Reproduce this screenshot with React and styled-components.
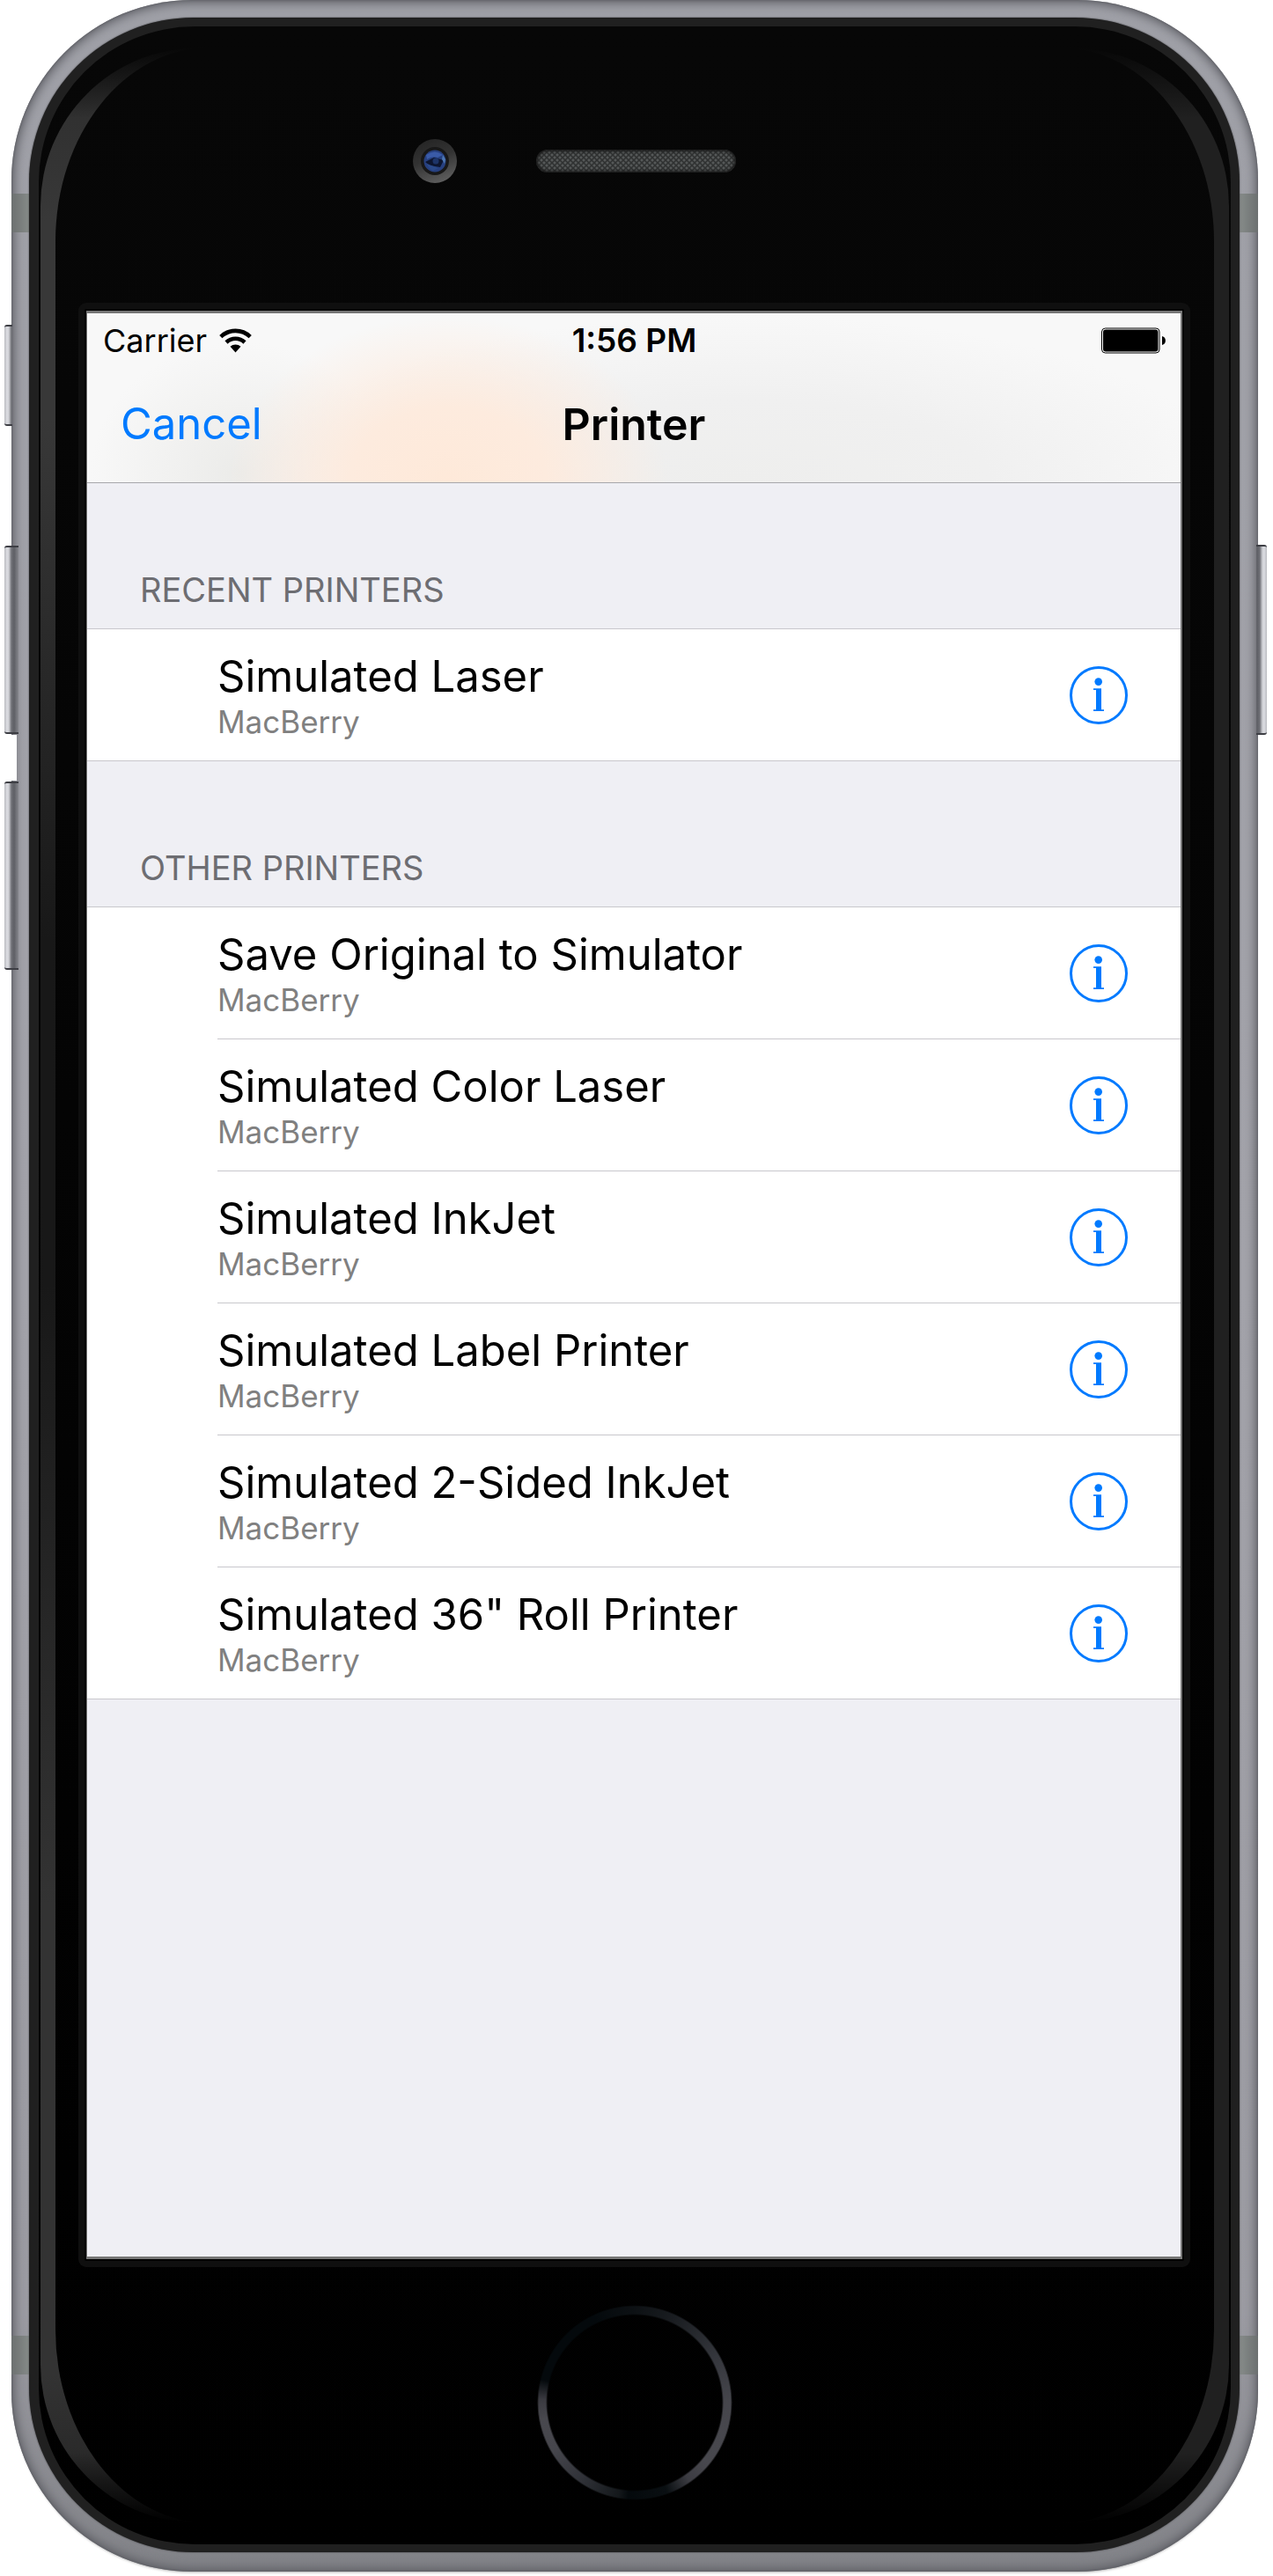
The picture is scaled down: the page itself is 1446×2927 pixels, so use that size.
import React from "react";
import styled, { createGlobalStyle } from "styled-components";

const GlobalStyle = createGlobalStyle`
  *, *::before, *::after { box-sizing: border-box; }
  body {
    margin: 0;
    background: #fff;
    font-family: Inter, "Liberation Sans", sans-serif;
    -webkit-font-smoothing: antialiased;
  }
  h1, h2, p, ul { margin: 0; padding: 0; font-weight: 400; }
  button { font: inherit; margin: 0; padding: 0; border: 0; background: none; cursor: pointer; }
`;

/* ---------- Device ---------- */

const Page = styled.div`
  padding: 0 17px 5px 13px;
`;

const Phone = styled.div`
  position: relative;
  padding: 20px 21px 22px 20px;
  border-radius: 205px;
  background: linear-gradient(#9fa0a7, #a3a3aa 50%, #9b9ba2 90%, #818287);
  box-shadow:
    inset 0 0 12px 3px #5c5d63,
    inset 0 0 3px #505157,
    0 3px 3px -2px rgba(0, 0, 0, 0.3);
`;

const AntennaBand = styled.span`
  position: absolute;
  ${(p) => p.$side}: 0;
  ${(p) => p.$edge}: ${(p) => (p.$edge === "top" ? 220 : 224)}px;
  width: 21px;
  height: 44px;
  background: linear-gradient(
    to ${(p) => (p.$side === "left" ? "right" : "left")},
    #6c7070,
    #878c8a
  );
`;

const SideKey = styled.span`
  position: absolute;
  top: ${(p) => p.$top}px;
  ${(p) => p.$side}: ${(p) => (p.$side === "left" ? -8 : -10)}px;
  width: ${(p) => p.$depth}px;
  height: ${(p) => p.$height}px;
  border-radius: ${(p) => (p.$side === "left" ? "3px 0 0 3px" : "0 3px 3px 0")};
  border: solid #3d3e44;
  border-width: 2px 0;
  background: linear-gradient(
    to ${(p) => (p.$side === "left" ? "right" : "left")},
    #b9babf,
    #dcdde2 3px,
    #cfd0d5 5px,
    #6f7076 8px,
    #5e5f65 11px,
    #85868c 16px
  );
`;

const KeyGap = styled.span`
  position: absolute;
  top: 835px;
  left: -1px;
  width: 7px;
  height: 52px;
  background: #fff;
`;

const Glass = styled.div`
  position: relative;
  padding: 10px 10px 9px 11px;
  border-radius: 187px;
  background: #202020;
  box-shadow: 0 0 2px #3a3a3d;
`;

const Rim = styled.div`
  padding: 24px 2px;
  border-radius: 177px;
  background: linear-gradient(#070707, #000);
`;

const Glare = styled.div`
  padding: 0 17px;
  border-radius: 180px;
  background:
    linear-gradient(#070707, transparent 80px, transparent calc(100% - 80px), #000),
    linear-gradient(
      to right,
      transparent 50%,
      #202020 50%
    ),
    linear-gradient(#2c2c2c, #383838 7%, #383838 15%, #181818 36%, #181818 50%, #333 75%, #333 94%, #222);
`;

const Face = styled.div`
  padding: 0 27px 0 26px;
  border-radius: 175px / 220px;
  background: linear-gradient(#070707, #000);
`;

const TopBezel = styled.div`
  display: grid;
  grid-template-columns: 1fr auto 1fr;
  column-gap: 90px;
  align-items: center;
  padding: 104px 0 136px 4px;
`;

const Camera = styled.span`
  justify-self: end;
  display: grid;
  place-items: center;
  width: 50px;
  height: 50px;
  border-radius: 50%;
  background: linear-gradient(160deg, #222, #333 45%, #686868);
`;

const Lens = styled.svg`
  width: 34px;
  height: 34px;
`;

const Speaker = styled.span`
  width: 227px;
  height: 26px;
  border-radius: 13px;
  background:
    radial-gradient(circle, #555858 1px, transparent 2px) 0 0 / 6px 6px,
    radial-gradient(circle, #555858 1px, transparent 2px) 3px 3px / 6px 6px,
    #2f3131;
  box-shadow: inset 0 0 3px 2px #1c1c1c;
`;

const Bezel = styled.div`
  padding: 7px;
  border-radius: 9px;
  background: #0f0f0f;
`;

const Gasket = styled.div`
  padding: 2px;
  border-radius: 2px;
  background: #000;
`;

const ScreenEdge = styled.div`
  border: solid #767676;
  border-width: 3px 2px 3px 1px;
`;

const BottomBezel = styled.div`
  display: flex;
  justify-content: center;
  padding: 43px 0 26px;
`;

const HomeButton = styled.button`
  width: 222px;
  height: 222px;
  border-radius: 50%;
  background: conic-gradient(
    #0d1114,
    #1a1d21 25deg,
    #34363c 60deg,
    #46464c 90deg,
    #48484e 130deg,
    #3c3c42 145deg,
    #0a0f12 160deg,
    #04090c 184deg,
    #14181b 190deg,
    #303238 215deg,
    #46464c 240deg,
    #48484e 260deg,
    #3a3a40 272deg,
    #04090c 284deg,
    #04090c 335deg,
    #0d1114
  );
  mask: radial-gradient(circle closest-side, transparent 99px, #000 101px, #000 109px, transparent 111px);
`;

/* ---------- Screen ---------- */

const Screen = styled.main`
  display: flex;
  flex-direction: column;
  aspect-ratio: 1242 / 2208;
  background: #efeff4;
  color: #000;
`;

const Header = styled.header`
  border-bottom: 1px solid #a7a7ab;
  background:
    radial-gradient(ellipse 250px 190px at 33% 100%, #fee9d9, #fdebde 45%, rgba(253, 238, 228, 0) 100%),
    radial-gradient(ellipse 170px 150px at 14% 95%, #ebebe9, rgba(240, 240, 240, 0)),
    radial-gradient(ellipse 560px 190px at 60% 100%, #eeeeed, #f0f0f0 50%, rgba(246, 246, 246, 0)),
    #f8f8f8;
`;

const StatusBar = styled.div`
  display: grid;
  grid-template-columns: 1fr auto 1fr;
  align-items: center;
  height: 60px;
  padding: 2px 17px 0 18px;
  font-size: 36px;
  line-height: 44px;
`;

const Network = styled.div`
  display: flex;
  align-items: center;
  gap: 14px;
`;

const Clock = styled.time`
  font-size: 37px;
  font-weight: 600;
`;

const WifiIcon = styled.svg`
  width: 37px;
  height: 28px;
`;

const BatteryIcon = styled.svg`
  justify-self: end;
  width: 73px;
  height: 30px;
`;

const NavBar = styled.nav`
  display: grid;
  grid-template-columns: 1fr auto 1fr;
  align-items: center;
  height: 132px;
  padding: 0 38px;
  line-height: 60px;
`;

const CancelButton = styled.button`
  justify-self: start;
  color: #007aff;
  font-size: 49px;
`;

const Title = styled.h1`
  font-size: 50px;
  font-weight: 600;
`;

const SectionTitle = styled.h2`
  padding: 97px 60px 20px;
  color: #6d6d72;
  font-size: 38px;
  line-height: 48px;
  text-transform: uppercase;
`;

const List = styled.ul`
  list-style: none;
  background: #fff;
  border: solid #c8c7cc;
  border-width: 1px 0;
`;

const Row = styled.li`
  display: flex;
  margin-left: 148px;
  padding-right: 60px;
  align-items: center;
  justify-content: space-between;

  & + & {
    border-top: 1px solid #c8c7cc;
  }
`;

const Labels = styled.div`
  padding: 25px 0 22px;
`;

const PrinterName = styled.p`
  font-size: 49px;
  line-height: 58px;
`;

const Location = styled.p`
  color: #808080;
  font-size: 35px;
  line-height: 44px;
`;

const InfoButton = styled.button`
  width: 66px;
  height: 66px;
  color: #007aff;

  svg {
    display: block;
    width: 100%;
    height: 100%;
  }
`;

function Wifi() {
  return (
    <WifiIcon viewBox="0 0 37 28" role="img" aria-label="Wi-Fi">
      <g fill="none" stroke="#000" strokeWidth="4.6">
        <path d="M1.8 9.6a24 24 0 0 1 33.4 0" />
        <path d="M8 16a15.200 15.200 0 0 1 21 0" />
      </g>
      <path d="M18.500 27.500l-6-6.800a9 9 0 0 1 12 0z" />
    </WifiIcon>
  );
}

function Battery() {
  return (
    <BatteryIcon viewBox="0 0 73 30" role="img" aria-label="Battery full">
      <rect x="0.500" y="1" width="65.500" height="28" rx="4" fill="#fff" stroke="#000" />
      <rect x="2" y="2.500" width="62.500" height="25" rx="3" />
      <path d="M69 10c5.200 1 5.200 9 0 10z" />
    </BatteryIcon>
  );
}

function Info({ name }) {
  return (
    <InfoButton type="button" aria-label={`More about ${name}`}>
      <svg viewBox="0 0 66 66">
        <circle cx="33" cy="33" r="31.500" fill="none" stroke="currentColor" strokeWidth="3" />
        <circle cx="32.700" cy="17.600" r="4.300" fill="currentColor" />
        <path d="M27 25.200h9v24.100h3v1.700H27v-1.700h3V26.900h-3z" fill="currentColor" />
      </svg>
    </InfoButton>
  );
}

const sections = [
  { title: "Recent Printers", printers: ["Simulated Laser"] },
  {
    title: "Other Printers",
    printers: [
      "Save Original to Simulator",
      "Simulated Color Laser",
      "Simulated InkJet",
      "Simulated Label Printer",
      "Simulated 2-Sided InkJet",
      'Simulated 36" Roll Printer',
    ],
  },
];

function PrinterSection({ title, printers }) {
  return (
    <section>
      <SectionTitle>{title}</SectionTitle>
      <List>
        {printers.map((name) => (
          <Row key={name}>
            <Labels>
              <PrinterName>{name}</PrinterName>
              <Location>MacBerry</Location>
            </Labels>
            <Info name={name} />
          </Row>
        ))}
      </List>
    </section>
  );
}

export default function App() {
  return (
    <Page>
      <GlobalStyle />
      <Phone>
        <AntennaBand $side="left" $edge="top" />
        <AntennaBand $side="right" $edge="top" />
        <AntennaBand $side="left" $edge="bottom" />
        <AntennaBand $side="right" $edge="bottom" />
        <SideKey $side="left" $top={369} $height={115} $depth={9} />
        <SideKey $side="left" $top={620} $height={214} $depth={16} />
        <KeyGap />
        <SideKey $side="left" $top={888} $height={214} $depth={16} />
        <SideKey $side="right" $top={619} $height={216} $depth={12} />
        <Glass>
          <Rim>
            <Glare>
              <Face>
                <TopBezel>
                  <Camera>
                    <Lens viewBox="0 0 34 34" aria-hidden="true">
                      <circle cx="17" cy="17" r="16" fill="#181818" />
                      <circle cx="17" cy="17" r="12.500" fill="#27407f" />
                      <path d="M7 10q10-7 19 0l-6 3q-6-2-12 2z" fill="#3a5ba8" />
                      <path d="M6 18l10-5 11 3-4 8-12-2z" fill="#0d1630" />
                      <circle cx="18" cy="17" r="3.500" fill="#1d3468" />
                      <path d="M8 20l5 2 8 3-6 3q-5-2-7-8z" fill="#2b4a8a" />
                      <path d="M26 10l3 5-1 5-3-5z" fill="#4d78b4" />
                    </Lens>
                  </Camera>
                  <Speaker />
                </TopBezel>
                <Bezel>
                  <Gasket>
                    <ScreenEdge>
                      <Screen>
                        <Header>
                          <StatusBar>
                            <Network>
                              <span>Carrier</span>
                              <Wifi />
                            </Network>
                            <Clock dateTime="13:56">1:56 PM</Clock>
                            <Battery />
                          </StatusBar>
                          <NavBar>
                            <CancelButton type="button">Cancel</CancelButton>
                            <Title>Printer</Title>
                          </NavBar>
                        </Header>
                        {sections.map((section) => (
                          <PrinterSection key={section.title} {...section} />
                        ))}
                      </Screen>
                    </ScreenEdge>
                  </Gasket>
                </Bezel>
                <BottomBezel>
                  <HomeButton type="button" aria-label="Home" />
                </BottomBezel>
              </Face>
            </Glare>
          </Rim>
        </Glass>
      </Phone>
    </Page>
  );
}
